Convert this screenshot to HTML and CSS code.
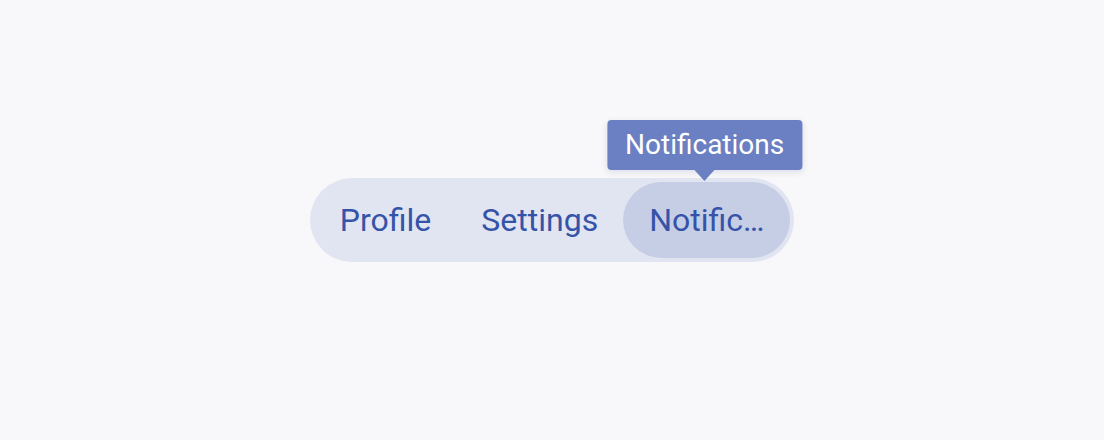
FILE: index.html
```html
<!DOCTYPE html>
<html>
<head>
<meta charset="utf-8">
<link rel="stylesheet" href="styles.css">
</head>
<body>
<div class="stage">
  <div class="tabs">
    <div class="tab">Profile</div>
    <div class="tab">Settings</div>
    <div class="tab active">
      <span class="label">Notifications</span>
      <div class="tooltip">Notifications</div>
    </div>
  </div>
</div>
</body>
</html>
```
FILE: styles.css
```css
html, body {
  margin: 0;
  padding: 0;
  background: #f8f8fa;
  font-family: Roboto, "Liberation Sans", sans-serif;
}
.stage {
  width: 1104px;
  height: 440px;
  display: flex;
  align-items: center;
  justify-content: center;
}
.tabs {
  display: flex;
  align-items: center;
  padding: 4px 4px 4px 5px;
  border-radius: 42px;
  background: #e1e5f2;
}
.tab {
  position: relative;
  height: 76px;
  padding: 0 25px;
  display: flex;
  align-items: center;
  font-size: 32px;
  color: #3553a8;
  border-radius: 38px;
  white-space: nowrap;
}
.tab.active {
  background: #c6cee6;
  padding: 0 25px 0 26px;
}
.label {
  display: block;
  width: 116px;
  overflow: hidden;
  text-overflow: ellipsis;
}
.tooltip {
  position: absolute;
  bottom: 88px;
  left: 50%;
  transform: translateX(calc(-50% - 2px));
  background: #6a80c2;
  color: #fff;
  font-size: 28px;
  line-height: 50px;
  padding: 0 18px;
  border-radius: 4px;
  box-shadow: 0 2px 6px rgba(60, 70, 120, 0.15);
}
.tooltip::after {
  content: "";
  position: absolute;
  top: 100%;
  left: 50%;
  transform: translateX(-50%);
  border-left: 10px solid transparent;
  border-right: 10px solid transparent;
  border-top: 11px solid #6a80c2;
}
```
